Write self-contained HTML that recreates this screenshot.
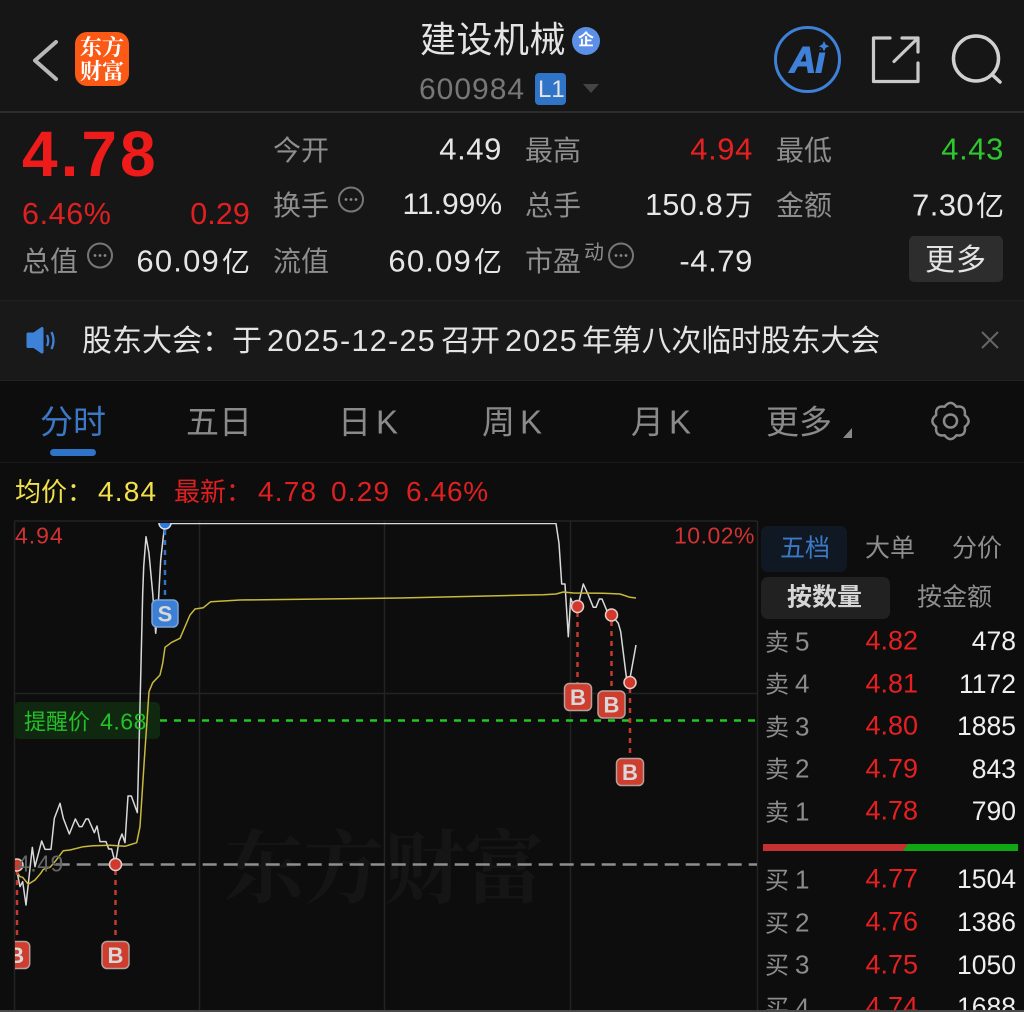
<!DOCTYPE html>
<html lang="zh-CN"><head><meta charset="utf-8"><title>建设机械</title>
<style>
html,body{margin:0;padding:0;background:#0d0d0d}
#p{position:relative;width:1024px;height:1012px;overflow:hidden;background:#0d0d0d;font-family:"Liberation Sans","Noto Sans CJK SC",sans-serif}
svg{position:absolute;left:0;top:0}
.t{position:absolute;white-space:nowrap;line-height:1;transform:translateY(-50%)}
.r{transform:translate(-100%,-50%)}
.g{color:#8e8e8e;font-size:28px;margin-top:1px}
.v{color:#e6e6e6;font-size:31px;letter-spacing:.6px}
.v span{font-size:28px;letter-spacing:0;margin-left:2px}
.ob{font-size:24px;color:#8c8c8c}
.ob b{font-weight:400;font-size:26px;margin-left:6px}
.pr{font-size:27px;color:#e62020}
.q{font-size:26.500px;color:#efefef}
.tab{font-size:33px;color:#8a8a8a}
.tab span{margin-left:5px}
.n{font-size:30px;color:#e4e4e4}
.d{font-size:30.500px;color:#e4e4e4;letter-spacing:1.300px}
</style></head><body><div id="p">
<div style="position:absolute;left:0;top:0;width:1024px;height:300px;background:#161616"></div>
<div style="position:absolute;left:0;top:111px;width:1024px;height:2px;background:#2c2c2c"></div>
<div style="position:absolute;left:0;top:300px;width:1024px;height:81px;background:#191919;border-top:1px solid #202020;border-bottom:1px solid #222;box-sizing:border-box"></div>
<div style="position:absolute;left:0;top:462px;width:1024px;height:1px;background:#191919"></div>
<div class="t" style="left:224px;top:862px;font:700 80px 'Noto Serif CJK SC',serif;color:#151515;transform:translateY(-50%)">东方财富</div>

<svg width="1024" height="1012" viewBox="0 0 1024 1012" fill="none">
<defs><clipPath id="c"><rect x="15" y="523" width="745" height="489"/></clipPath></defs>
<path d="M56 42 35 60.500 56 79" stroke="#b8b8b8" stroke-width="4" stroke-linecap="round" stroke-linejoin="round"/>
<rect x="75" y="32" width="54" height="54" rx="12" fill="#fb5a16"/>
<circle cx="586" cy="41" r="14" fill="#5c8fe6"/>
<rect x="535" y="73" width="31" height="32" rx="4" fill="#2f74c6"/>
<path d="M583 84h16l-8 9z" fill="#444"/>
<circle cx="807.500" cy="59.500" r="32" stroke="#3f80d8" stroke-width="3"/>
<path d="M890 38H873.500V81.500H918V63M894 61.500 918 38M902 38H918V52" stroke="#c9c9c9" stroke-width="3.200" stroke-linejoin="round" stroke-linecap="round"/>
<circle cx="976" cy="58.500" r="22.500" stroke="#d0d0d0" stroke-width="3.500"/>
<path d="M992 74.500 1000 82" stroke="#d0d0d0" stroke-width="3.500" stroke-linecap="round"/>
<g stroke="#777" stroke-width="2"><circle cx="351" cy="199.500" r="12"/><circle cx="100" cy="255.500" r="12"/><circle cx="621" cy="255.500" r="12"/></g>
<g fill="#888"><circle cx="346" cy="199.500" r="1.400"/><circle cx="351" cy="199.500" r="1.400"/><circle cx="356" cy="199.500" r="1.400"/><circle cx="95" cy="255.500" r="1.400"/><circle cx="100" cy="255.500" r="1.400"/><circle cx="105" cy="255.500" r="1.400"/><circle cx="616" cy="255.500" r="1.400"/><circle cx="621" cy="255.500" r="1.400"/><circle cx="626" cy="255.500" r="1.400"/></g>
<rect x="909" y="236" width="94" height="46" rx="5" fill="#2d2d2d"/>
<path d="M28 334h6l8-5.500v23.500l-8-5.500h-6z" fill="#3d82d6" stroke="#3d82d6" stroke-width="3" stroke-linejoin="round"/>
<path d="M47 335q2.500 5.500 0 11M51.500 332q4 8.500 0 17" stroke="#3d82d6" stroke-width="2.300"/>
<path d="M982 332 998 348M998 332 982 348" stroke="#666" stroke-width="2"/>
<rect x="50" y="449" width="46" height="7" rx="3.500" fill="#2f74c6"/>
<path d="M852 428v10h-9z" fill="#888"/>
<g transform="translate(950.500 421)" stroke="#8a8a8a" stroke-width="2.500" stroke-linejoin="round">
<path d="M14.300 5.900Q15.600 15.600 5.900 14.300Q0 22 -5.900 14.300Q-15.600 15.600 -14.300 5.900Q-22 0 -14.300 -5.900Q-15.600 -15.600 -5.900 -14.300Q0 -22 5.900 -14.300Q15.600 -15.600 14.300 -5.900Q22 0 14.300 5.900Z"/>
<circle r="6.500"/>
</g>

<!-- chart grid -->
<g stroke="#232323" stroke-width="1.500">
<path d="M14.500 521H757M14.500 693.500H757M14.500 521V1010M199.500 521V1010M384.500 521V1010M570.500 521V1010M757.500 521V1010"/>
</g>
<rect x="14" y="702" width="146" height="37" rx="5" fill="#10280f"/>
<path d="M160 720.500H757" stroke="#1fc824" stroke-width="2.500" stroke-dasharray="7 7"/>
<path d="M55.700 864.500H757" stroke="#8f8f8f" stroke-width="2.500" stroke-dasharray="14 7"/>
<rect x="761" y="526" width="86" height="46" rx="7" fill="#101923"/>
<rect x="761" y="577" width="129" height="42" rx="7" fill="#212122"/>
<rect x="763" y="844" width="145" height="7" fill="#c53030"/>
<path d="M908 844h110v7H903z" fill="#0ea814"/>

<g clip-path="url(#c)">
<polyline vector-effect="non-scaling-stroke" fill="none" stroke="#d9d9d9" stroke-width="1.500" stroke-linejoin="round" transform="translate(0 760) scale(.33333)" points="50,330 60,380 68,365 78,435 85,370 97,262 105,320 125,243 135,268 153,268 163,175 180,130 190,175 208,222 226,177 238,200 246,200 258,177 265,177 283,218 291,198 300,245 318,245 326,267 335,267 346,310 357,245 366,222 375,248 384,108 394,108 412,158 416,0"/>
<polyline fill="none" stroke="#d9d9d9" stroke-width="1.500" stroke-linejoin="round" points="138.700,760 140.700,676.700 142.700,593.300 143.700,566.700 146,536.700 149,553.300 152.700,593.300 155.700,633.300 158.300,603.300 160.700,560 163.300,536.700 165,523.500 556,523.500 559,543.300 561.700,584 565,584 568.300,636.700 570.700,598.300 573.300,605 577.700,606.700 583.300,584 588.300,595 593.300,607.300 596,607.300 599.300,599 602,599 607.300,611.700 611.700,615 618.300,623.300 620.700,631.700 626.700,680 630,678.300 636,645"/>
<polyline fill="none" stroke="#c9b93c" stroke-width="1.500" stroke-linejoin="round" points="16.700,871.700 20,876.700 22.700,877.300 28.300,884.300 35,880 40.700,873.300 43.300,869.300 50,867.300 55,861.700 63.300,850.700 70,850 83.300,846.700 93.300,845.700 110,845.300 125,846.300 136.700,842.700 140,826.700 144.300,760 149,691.700 152.700,682.700 160,675 162.700,663.300 165,647.300 171.700,642.300 180,638.300 190,615 195,609 203.300,607.700 210.700,601.700 240,600 400,598 530,595 543.300,594.700 556,594 563.300,592 573.300,593 603.300,593.300 620,594 630,597.300 636,598"/>
<g stroke="#c43a2e" stroke-width="2.500" stroke-dasharray="5 5">
<path d="M17 870V940M115.500 870V940M577.500 612V683M611.500 621V690M630 688V758"/>
</g>
<path d="M165 530V600" stroke="#2f74c6" stroke-width="2.500" stroke-dasharray="5 5"/>
<g fill="#d0392c" stroke="#e2cfcb" stroke-width="1.500">
<circle cx="17" cy="865" r="6"/><circle cx="115.500" cy="864.500" r="6"/><circle cx="577.500" cy="606.500" r="6"/><circle cx="611.500" cy="615" r="6"/><circle cx="630" cy="682.500" r="6"/>
</g>
<circle cx="165" cy="523" r="6" fill="#2f7ad8" stroke="#d7e2ee" stroke-width="1.500"/>
<g fill="#cf3d2e" stroke="#b5a09c" stroke-width="1.500">
<rect x="2.700" y="941.500" width="27" height="27" rx="5"/><rect x="102" y="941.500" width="27" height="27" rx="5"/><rect x="564.500" y="683.500" width="27" height="27" rx="5"/><rect x="598" y="691" width="27" height="27" rx="5"/><rect x="616.500" y="758.500" width="27" height="27" rx="5"/>
</g>
<rect x="152" y="600" width="26" height="27" rx="5" fill="#3b7fd6" stroke="#7ea4d4" stroke-width="1.500"/>
<g font-family="Liberation Sans,sans-serif" font-size="22" font-weight="700" fill="#d8d8d8" text-anchor="middle">
<text x="16.200" y="963">B</text><text x="115.500" y="963">B</text><text x="578" y="705">B</text><text x="611.500" y="712.500">B</text><text x="630" y="780">B</text><text x="165" y="621.500">S</text>
</g>
</g>
</svg>

<div class="t" style="left:80px;top:47px;font:700 22px/1 'Noto Serif CJK SC',serif;color:#fff">东方</div>
<div class="t" style="left:80px;top:71px;font:700 22px/1 'Noto Serif CJK SC',serif;color:#fff">财富</div>
<div class="t" style="left:420px;top:40px;font-size:36px;color:#e4e4e4;letter-spacing:.5px">建设机械</div>
<div class="t" style="left:586px;top:41px;font-size:16px;font-weight:700;color:#fff;transform:translate(-50%,-50%)">企</div>
<div class="t" style="left:419px;top:90px;font-size:30px;color:#777;letter-spacing:1px">600984</div>
<div class="t" style="left:538px;top:90px;font-size:24px;color:#e4e4e4">L1</div>
<div class="t" style="left:807px;top:60px;font-size:37px;font-weight:700;font-style:italic;letter-spacing:-1px;color:#3f80d8;-webkit-text-stroke:1px #3f80d8;transform:translate(-50%,-50%)">Ai</div>
<svg width="1024" height="120" viewBox="0 0 1024 120" fill="none"><circle cx="825" cy="46" r="5.500" fill="#161616"/><path d="M824 41l1.700 3.500 3.500 1.700-3.500 1.700-1.700 3.500-1.700-3.500-3.500-1.700 3.500-1.700z" fill="#3f80d8"/></svg>

<div class="t" style="left:22px;top:154px;font-size:64px;font-weight:700;color:#ee1b1b;letter-spacing:3px">4.78</div>
<div class="t" style="left:22px;top:214px;font-size:30.500px;color:#e02020;letter-spacing:.6px">6.46%</div>
<div class="t r" style="left:250px;top:214px;font-size:30.500px;color:#e02020;letter-spacing:.1px">0.29</div>
<div class="t g" style="left:22px;top:261px">总值</div>
<div class="t r v" style="left:250px;top:261px;letter-spacing:1.200px">60.09<span>亿</span></div>

<div class="t g" style="left:273px;top:150px">今开</div>
<div class="t r v" style="left:502px;top:149px">4.49</div>
<div class="t g" style="left:273px;top:205px">换手</div>
<div class="t r v" style="left:502px;top:205px;font-size:30px;letter-spacing:0">11.99%</div>
<div class="t g" style="left:273px;top:261px">流值</div>
<div class="t r v" style="left:502px;top:261px;letter-spacing:1.200px">60.09<span>亿</span></div>

<div class="t g" style="left:525px;top:150px">最高</div>
<div class="t r v" style="left:753px;top:149px;color:#e62020">4.94</div>
<div class="t g" style="left:525px;top:205px">总手</div>
<div class="t r v" style="left:753px;top:205px;font-size:30.500px;letter-spacing:.3px">150.8<span>万</span></div>
<div class="t g" style="left:525px;top:261px">市盈</div>
<div class="t" style="left:584px;top:253px;font-size:20px;color:#8e8e8e">动</div>
<div class="t r v" style="left:753px;top:261px">-4.79</div>

<div class="t g" style="left:776px;top:150px">最低</div>
<div class="t r v" style="left:1004px;top:149px;color:#2ec72e">4.43</div>
<div class="t g" style="left:776px;top:205px">金额</div>
<div class="t r v" style="left:1004px;top:205px;letter-spacing:.4px">7.30<span>亿</span></div>
<div class="t" style="left:956px;top:261px;font-size:30px;color:#e4e4e4;transform:translate(-50%,-50%);letter-spacing:1px">更多</div>

<div class="t n" style="left:82px;top:342px">股东大会：于</div>
<div class="t d" style="left:267px;top:341px">2025-12-25</div>
<div class="t n" style="left:441px;top:342px;letter-spacing:-1px">召开</div>
<div class="t d" style="left:505px;top:341px">2025</div>
<div class="t n" style="left:582px;top:342px;letter-spacing:-.2px">年第八次临时股东大会</div>

<div class="t tab" style="left:40px;top:422px;color:#3b78c6">分时</div>
<div class="t tab" style="left:186px;top:422px">五日</div>
<div class="t tab" style="left:338px;top:422px">日<span>K</span></div>
<div class="t tab" style="left:482px;top:422px">周<span>K</span></div>
<div class="t tab" style="left:631px;top:422px">月<span>K</span></div>
<div class="t tab" style="left:766px;top:422px">更多</div>

<div class="t" style="left:15px;top:492px;font-size:26px;color:#f2e14a">均价：</div>
<div class="t" style="left:98px;top:492px;font-size:28px;color:#f2e14a;letter-spacing:1.200px">4.84</div>
<div class="t" style="left:174px;top:492px;font-size:26px;color:#e02020">最新：</div>
<div class="t" style="left:258px;top:492px;font-size:28px;color:#e02020;letter-spacing:1.200px">4.78</div>
<div class="t" style="left:331px;top:492px;font-size:28px;color:#e02020;letter-spacing:1.200px">0.29</div>
<div class="t" style="left:406px;top:492px;font-size:28px;color:#e02020;letter-spacing:.7px">6.46%</div>

<div class="t" style="left:15px;top:536px;font-size:23px;color:#d23232;letter-spacing:1px">4.94</div>
<div class="t r" style="left:755px;top:536px;font-size:23px;color:#d23232;letter-spacing:.5px">10.02%</div>
<div class="t" style="left:17px;top:864px;font-size:23px;color:#666;letter-spacing:.5px">4.49</div>
<div class="t" style="left:24px;top:722px;font-size:22px;color:#24c02a">提醒价 <span style="font-size:23px;letter-spacing:.5px;margin-left:4px">4.68</span></div>

<div class="t" style="left:780px;top:549px;font-size:25px;color:#3b78c6">五档</div>
<div class="t" style="left:865px;top:549px;font-size:25px;color:#8e8e8e">大单</div>
<div class="t" style="left:952px;top:549px;font-size:25px;color:#8e8e8e">分价</div>
<div class="t" style="left:787px;top:598px;font-size:25px;font-weight:700;color:#d6d6d6">按数量</div>
<div class="t" style="left:917px;top:598px;font-size:25px;color:#8e8e8e">按金额</div>

<div class="t ob" style="left:765px;top:642px">卖<b>5</b></div><div class="t r pr" style="left:918px;top:641px">4.82</div><div class="t r q" style="left:1016px;top:641px">478</div>
<div class="t ob" style="left:765px;top:684px">卖<b>4</b></div><div class="t r pr" style="left:918px;top:684px">4.81</div><div class="t r q" style="left:1016px;top:684px">1172</div>
<div class="t ob" style="left:765px;top:727px">卖<b>3</b></div><div class="t r pr" style="left:918px;top:726px">4.80</div><div class="t r q" style="left:1016px;top:726px">1885</div>
<div class="t ob" style="left:765px;top:769px">卖<b>2</b></div><div class="t r pr" style="left:918px;top:769px">4.79</div><div class="t r q" style="left:1016px;top:769px">843</div>
<div class="t ob" style="left:765px;top:812px">卖<b>1</b></div><div class="t r pr" style="left:918px;top:811px">4.78</div><div class="t r q" style="left:1016px;top:811px">790</div>
<div class="t ob" style="left:765px;top:880px">买<b>1</b></div><div class="t r pr" style="left:918px;top:879px">4.77</div><div class="t r q" style="left:1016px;top:879px">1504</div>
<div class="t ob" style="left:765px;top:923px">买<b>2</b></div><div class="t r pr" style="left:918px;top:922px">4.76</div><div class="t r q" style="left:1016px;top:922px">1386</div>
<div class="t ob" style="left:765px;top:965px">买<b>3</b></div><div class="t r pr" style="left:918px;top:965px">4.75</div><div class="t r q" style="left:1016px;top:965px">1050</div>
<div class="t ob" style="left:765px;top:1008px">买<b>4</b></div><div class="t r pr" style="left:918px;top:1007px">4.74</div><div class="t r q" style="left:1016px;top:1007px">1688</div>
<div style="position:absolute;left:0;top:1010px;width:1024px;height:2px;background:#4a4a4a"></div>
</div></body></html>
